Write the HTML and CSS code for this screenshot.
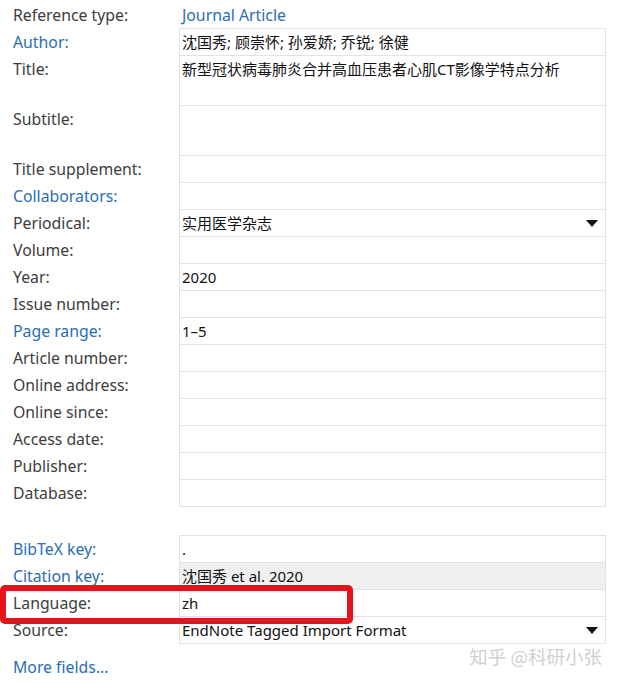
FILE: index.html
```html
<!DOCTYPE html>
<html>
<head>
    <meta charset="utf-8">
    <title>Item info</title>
    <link rel="stylesheet" href="styles.css">
</head>
<body>
    <div class="editor">
        <div class="row row-type">
            <div class="label">Reference type:</div>
            <div class="type-value">Journal Article</div>
        </div>

        <div class="group">
            <div class="row">
                <div class="label link">Author:</div>
                <div class="value">沈国秀; 顾崇怀; 孙爱娇; 乔锐; 徐健</div>
            </div>
            <div class="row tall">
                <div class="label">Title:</div>
                <div class="value">新型冠状病毒肺炎合并高血压患者心肌CT影像学特点分析</div>
            </div>
            <div class="row tall">
                <div class="label">Subtitle:</div>
                <div class="value"></div>
            </div>
            <div class="row">
                <div class="label">Title supplement:</div>
                <div class="value"></div>
            </div>
            <div class="row">
                <div class="label link">Collaborators:</div>
                <div class="value"></div>
            </div>
            <div class="row">
                <div class="label">Periodical:</div>
                <div class="value dropdown">
                    <span>实用医学杂志</span>
                    <svg class="arrow" width="12" height="7" viewBox="0 0 12 7"><path d="M0 0h12L6 7z"/></svg>
                </div>
            </div>
            <div class="row">
                <div class="label">Volume:</div>
                <div class="value"></div>
            </div>
            <div class="row">
                <div class="label">Year:</div>
                <div class="value">2020</div>
            </div>
            <div class="row">
                <div class="label">Issue number:</div>
                <div class="value"></div>
            </div>
            <div class="row">
                <div class="label link">Page range:</div>
                <div class="value">1–5</div>
            </div>
            <div class="row">
                <div class="label">Article number:</div>
                <div class="value"></div>
            </div>
            <div class="row">
                <div class="label">Online address:</div>
                <div class="value"></div>
            </div>
            <div class="row">
                <div class="label">Online since:</div>
                <div class="value"></div>
            </div>
            <div class="row">
                <div class="label">Access date:</div>
                <div class="value"></div>
            </div>
            <div class="row">
                <div class="label">Publisher:</div>
                <div class="value"></div>
            </div>
            <div class="row">
                <div class="label">Database:</div>
                <div class="value"></div>
            </div>
        </div>

        <div class="group group-extra">
            <div class="row">
                <div class="label link">BibTeX key:</div>
                <div class="value">.</div>
            </div>
            <div class="row">
                <div class="label link">Citation key:</div>
                <div class="value readonly">沈国秀 et al. 2020</div>
            </div>
            <div class="row">
                <div class="label">Language:</div>
                <div class="value">zh</div>
            </div>
            <div class="row">
                <div class="label">Source:</div>
                <div class="value dropdown">
                    <span>EndNote Tagged Import Format</span>
                    <svg class="arrow" width="12" height="7" viewBox="0 0 12 7"><path d="M0 0h12L6 7z"/></svg>
                </div>
            </div>
        </div>

        <div class="more link">More fields...</div>

        <div class="highlight"></div>
        <div class="watermark">知乎 @科研小张</div>
    </div>
</body>
</html>
```

FILE: styles.css
```css
body {
    margin: 0;
    background: white;
    font-family: "Noto Sans", "Noto Sans CJK SC", sans-serif;
    font-size: 15.8px;
}

.editor {
    position: relative;
    height: 683px;
}

.row {
    display: grid;
    grid-template-columns: 179px 427px;
}

.label {
    padding-left: 13px;
    line-height: 26px;
    color: #3d3d3d;
    white-space: nowrap;
}

.link {
    color: #2a6db3;
}

.row-type {
    height: 28px;
}

.row-type .label,
.type-value {
    line-height: 30px;
}

.type-value {
    padding-left: 3px;
    color: #2a6db3;
}

.value {
    height: 27px;
    box-sizing: border-box;
    border: 1px solid #e2e2e2;
    border-top: none;
    padding-left: 2px;
    line-height: 26px;
    color: #111;
    font-size: 15px;
    white-space: nowrap;
    overflow: hidden;
}

.group .row:first-child .value {
    height: 28px;
    border-top: 1px solid #e2e2e2;
}

.group .row:first-child .label {
    padding-top: 1px;
}

.row.tall .value {
    height: 50px;
}

.group-extra {
    margin-top: 28px;
}

.readonly {
    background: #efefef;
}

.dropdown {
    display: flex;
    align-items: center;
    padding-right: 7px;
}

.dropdown .arrow {
    margin-left: auto;
    fill: #111;
}

.more {
    margin-top: 10px;
    padding-left: 13px;
    line-height: 26px;
}

.highlight {
    position: absolute;
    left: 0;
    top: 585px;
    width: 353px;
    height: 39px;
    box-sizing: border-box;
    border: 6px solid #e5131b;
    border-radius: 5px;
}

.watermark {
    position: absolute;
    right: 15px;
    top: 643px;
    font-family: "Noto Sans CJK SC", sans-serif;
    font-size: 18.5px;
    color: #d0d0d0;
    text-shadow: 0 0 2px white;
}
```
